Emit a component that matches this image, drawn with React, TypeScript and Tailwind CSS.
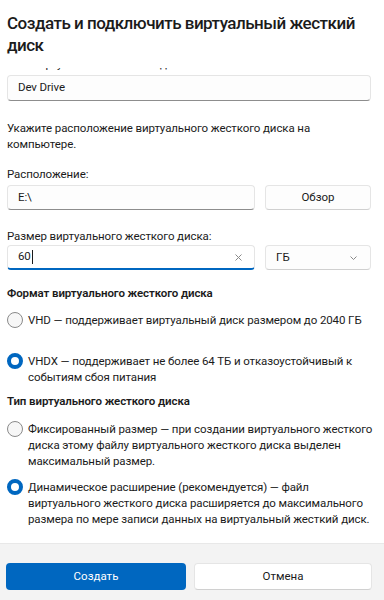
import React from "react";

const font = { fontFamily: 'Roboto, "Noto Sans", sans-serif' };

const Radio: React.FC<{ checked?: boolean; children: React.ReactNode }> = ({ checked, children }) => (
    <label className="flex items-start gap-[5px] -mr-[6px]">
        <span
            className={`shrink-0 w-[16px] h-[16px] rounded-full ${checked
                    ? "border-[4.5px] border-[#0067c0] bg-white"
                    : "border border-[#8a8a8a] bg-[#f7f7f7]"
                }`}
        />
        <span className="text-[11.5px] leading-[16px] tracking-[-0.1px] text-[#1b1b1b]">{children}</span>
    </label>
);

const TextBox: React.FC<{ value: string; focused?: boolean; clear?: boolean; className?: string }> = ({
    value,
    focused,
    clear,
    className,
}) => (
    <div
        className={`flex items-center px-[10px] rounded-[4px] border ${focused
                ? "bg-white border-[#e5e5e5] border-b-[2px] border-b-[#0067c0]"
                : "bg-[#fdfdfd] border-[#e5e5e5] border-b-[#8d8d8d]"
            } ${className ?? ""}`}
    >
        <span className="text-[11.5px] tracking-[-0.1px] text-[#1b1b1b]">{value}</span>
        {focused && <span className="ml-px w-px h-[14px] bg-[#1b1b1b]" />}
        {clear && (
            <svg className="ml-auto mr-[2px]" width="7" height="7" viewBox="0 0 7 7" fill="none">
                <path d="M0.5 0.5l6 6M6.5 0.5l-6 6" stroke="#8a8a8a" strokeWidth="1" />
            </svg>
        )}
    </div>
);

const Label: React.FC<{ className?: string; children: React.ReactNode }> = ({ className, children }) => (
    <p className={`text-[11.5px] leading-[16px] tracking-[-0.1px] text-[#1b1b1b] ${className ?? ""}`}>{children}</p>
);

export default function App() {
    return (
        <div style={font} className="w-[384px] h-[600px] bg-white flex flex-col overflow-hidden">
            {/* Header */}
            <div className="px-[7px] pt-[12px] pb-[12px] shrink-0">
                <h1 className="text-[17px] leading-[22px] font-medium tracking-[-0.5px] text-[#1b1b1b]">
                    Создать и подключить виртуальный жесткий диск
                </h1>
            </div>

            {/* Scrolled content */}
            <div className="flex-1 overflow-hidden px-[7px]">
                <div className="h-[4px] overflow-hidden flex flex-col justify-end">
                    <Label className="whitespace-nowrap shrink-0">Имя виртуального жесткого диска:</Label>
                </div>
                <TextBox value="Dev Drive" className="mt-[3px] h-[26px] w-[364px]" />

                <Label className="mt-[19px] pr-[30px]">
                    Укажите расположение виртуального жесткого диска на компьютере.
                </Label>

                <Label className="mt-[14px]">Расположение:</Label>
                <div className="mt-[3px] flex gap-[10px]">
                    <TextBox value="E:\" className="h-[25px] w-[248px]" />
                    <button className="w-[106px] h-[25px] rounded-[4px] border border-[#e5e5e5] border-b-[#d0d0d0] bg-[#fdfdfd] text-[11.5px] text-[#1b1b1b]">
                        Обзор
                    </button>
                </div>

                <Label className="mt-[18px]">Размер виртуального жесткого диска:</Label>
                <div className="mt-[1px] flex gap-[10px]">
                    <TextBox value="60" focused clear className="h-[25px] w-[248px]" />
                    <div className="w-[106px] h-[25px] rounded-[4px] border border-[#e5e5e5] border-b-[#d0d0d0] bg-[#fdfdfd] flex items-center px-[10px]">
                        <span className="text-[11.5px] text-[#1b1b1b]">ГБ</span>
                        <svg className="ml-auto mr-[3px]" width="7" height="4" viewBox="0 0 7 4" fill="none">
                            <path d="M0.5 0.5l3 3 3-3" stroke="#7a7a7a" strokeWidth="0.9" />
                        </svg>
                    </div>
                </div>

                <Label className="mt-[15px] font-semibold">Формат виртуального жесткого диска</Label>
                <div className="mt-[11px] flex flex-col gap-[25px]">
                    <Radio>VHD — поддерживает виртуальный диск размером до 2040 ГБ</Radio>
                    <Radio checked>
                        VHDX — поддерживает не более 64 ТБ и отказоустойчивый к событиям сбоя питания
                    </Radio>
                </div>

                <Label className="mt-[8px] font-semibold">Тип виртуального жесткого диска</Label>
                <div className="mt-[12px] flex flex-col gap-[10px]">
                    <Radio>
                        Фиксированный размер — при создании виртуального жесткого диска этому файлу
                        виртуального жесткого диска выделен максимальный размер.
                    </Radio>
                    <Radio checked>
                        Динамическое расширение (рекомендуется) — файл виртуального жесткого диска
                        расширяется до максимального размера по мере записи данных на виртуальный
                        жесткий диск.
                    </Radio>
                </div>
            </div>

            {/* Footer */}
            <div className="h-[57px] shrink-0 bg-[#f3f3f3] border-t border-[#e8e8e8] flex gap-[8px] px-[6px] pt-[19px]">
                <button className="w-[180px] h-[27px] rounded-[4px] bg-[#0067c0] text-white text-[11.5px]">
                    Создать
                </button>
                <button className="w-[178px] h-[27px] rounded-[4px] bg-white border border-[#e5e5e5] border-b-[#d0d0d0] text-[11.5px] text-[#1b1b1b]">
                    Отмена
                </button>
            </div>
        </div>
    );
}
